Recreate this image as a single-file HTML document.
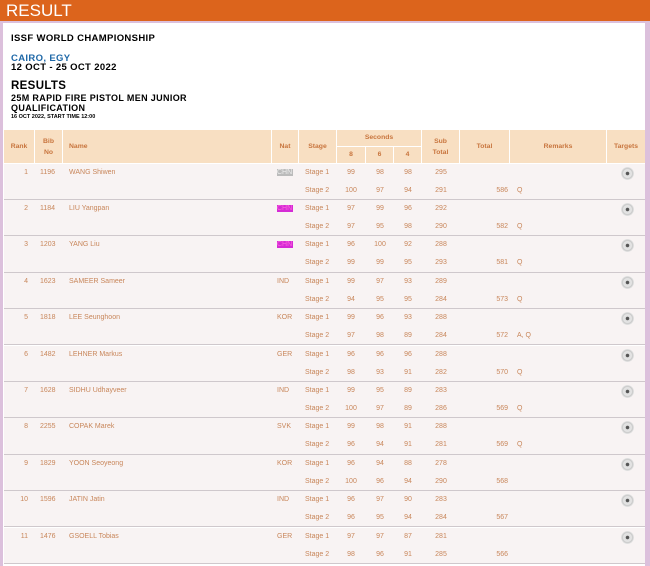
<!DOCTYPE html>
<html><head><meta charset="utf-8"><style>
*{margin:0;padding:0;box-sizing:border-box}
body{width:650px;height:566px;overflow:hidden;background:#dcc0dc;font-family:"Liberation Sans",Arial,sans-serif;position:relative}
.bar{position:absolute;left:0;top:0;width:650px;height:21px;background:#dc641c;color:#fff;font-size:17px;line-height:22px;padding-left:6px}
.main{position:absolute;left:3px;top:23px;width:642px;height:543px;background:#fff}
.h{position:absolute;left:8px;font-weight:bold;color:#000;white-space:nowrap;letter-spacing:0.35px}
.tbl{position:absolute;left:1px;top:107px;width:641px}
.hd{position:absolute;top:0;height:33px;background:#f8dfc2;color:#c8753e;font-size:6.8px;font-weight:bold;text-align:center;border-right:1px solid #fff}
.r{position:absolute;left:0;width:641px;height:36.4px;background:#f8f3f3;border-bottom:1px solid #cfc8cc}
.c{position:absolute;font-size:7px;color:#c8865a;white-space:nowrap}
.t{position:absolute;left:617px;width:13px;height:13px;border-radius:50%;background:radial-gradient(circle,#555 0 1.5px,#ddd 2px,#e6e6e6 4px,#c8c8c8 5px,#e8e8e8 6.5px)}
</style></head><body>
<div class="bar">RESULT</div>
<div class="main">
<div class="h" style="top:10px;font-size:9.5px">ISSF WORLD CHAMPIONSHIP</div>
<div class="h" style="top:30px;font-size:9.5px;color:#2069a8">CAIRO, EGY</div>
<div class="h" style="top:39px;font-size:9.5px">12 OCT - 25 OCT 2022</div>
<div class="h" style="top:57px;font-size:11.5px">RESULTS</div>
<div class="h" style="top:70px;font-size:9px">25M RAPID FIRE PISTOL MEN JUNIOR</div>
<div class="h" style="top:80px;font-size:9px">QUALIFICATION</div>
<div class="h" style="top:91px;font-size:5.5px;letter-spacing:0">16 OCT 2022, START TIME 12:00</div>
<div class="tbl">
<div class="hd" style="left:0;width:31px;line-height:33px">Rank</div>
<div class="hd" style="left:31px;width:28px;padding-top:6px;line-height:11px">Bib<br>No</div>
<div class="hd" style="left:59px;width:209px;line-height:33px;text-align:left;padding-left:6px">Name</div>
<div class="hd" style="left:268px;width:27px;line-height:33px">Nat</div>
<div class="hd" style="left:295px;width:38px;line-height:33px">Stage</div>
<div class="hd" style="left:333px;width:85px;height:17px;line-height:16px;border-bottom:1px solid #fff">Seconds</div>
<div class="hd" style="left:333px;top:17px;width:29px;height:16px;line-height:16px">8</div>
<div class="hd" style="left:362px;top:17px;width:28px;height:16px;line-height:16px">6</div>
<div class="hd" style="left:390px;top:17px;width:28px;height:16px;line-height:16px">4</div>
<div class="hd" style="left:418px;width:38px;padding-top:6px;line-height:11px">Sub<br>Total</div>
<div class="hd" style="left:456px;width:50px;line-height:33px">Total</div>
<div class="hd" style="left:506px;width:97px;line-height:33px">Remarks</div>
<div class="hd" style="left:603px;width:38px;line-height:33px;border-right:0">Targets</div>
<div id="rows"></div>
</div>
</div>
<script>
var d=[
[1,1196,"WANG Shiwen","CHN",1,[99,98,98,295],[100,97,94,291],586,"Q"],
[2,1184,"LIU Yangpan","CHN",2,[97,99,96,292],[97,95,98,290],582,"Q"],
[3,1203,"YANG Liu","CHN",2,[96,100,92,288],[99,99,95,293],581,"Q"],
[4,1623,"SAMEER Sameer","IND",0,[99,97,93,289],[94,95,95,284],573,"Q"],
[5,1818,"LEE Seunghoon","KOR",0,[99,96,93,288],[97,98,89,284],572,"A, Q"],
[6,1482,"LEHNER Markus","GER",0,[96,96,96,288],[98,93,91,282],570,"Q"],
[7,1628,"SIDHU Udhayveer","IND",0,[99,95,89,283],[100,97,89,286],569,"Q"],
[8,2255,"COPAK Marek","SVK",0,[99,98,91,288],[96,94,91,281],569,"Q"],
[9,1829,"YOON Seoyeong","KOR",0,[96,94,88,278],[100,96,94,290],568,""],
[10,1596,"JATIN Jatin","IND",0,[96,97,90,283],[96,95,94,284],567,""],
[11,1476,"GSOELL Tobias","GER",0,[97,97,87,281],[98,96,91,285],566,""]];
var h="";
d.forEach(function(a,i){
var top=33.5+i*36.4;
h+='<div class="r" style="top:'+top+'px">';
var y1=5,y2=23;
function c(x,y,t,al,w,ex){return '<div class="c" style="left:'+x+'px;top:'+y+'px;width:'+w+'px;text-align:'+al+';'+(ex||'')+'">'+t+'</div>'}
h+=c(0,y1,a[0],'right',24)+c(36,y1,a[1],'left',30)+c(65,y1,a[2],'left',200);
var nat=a[3];
if(a[4]==1)h+=c(273,y1,nat,'left',16,'background:#bbb;color:#eee');
else if(a[4]==2)h+=c(273,y1,nat,'left',16,'background:#d52bd5;color:#f6d');
else h+=c(273,y1,nat,'left',20);
h+=c(301,y1,'Stage 1','left',40)+c(301,y2,'Stage 2','left',40);
var xs=[347,376,404,437];
[a[5],a[6]].forEach(function(s,k){var y=k?y2:y1;for(var j=0;j<4;j++)h+=c(xs[j]-15,y,s[j],'center',30);});
h+=c(470,y2,a[7],'right',34)+c(513,y2,a[8],'left',40);
h+='<div class="t" style="top:3px"></div></div>';
});
document.getElementById('rows').innerHTML=h;
</script>
</body></html>
